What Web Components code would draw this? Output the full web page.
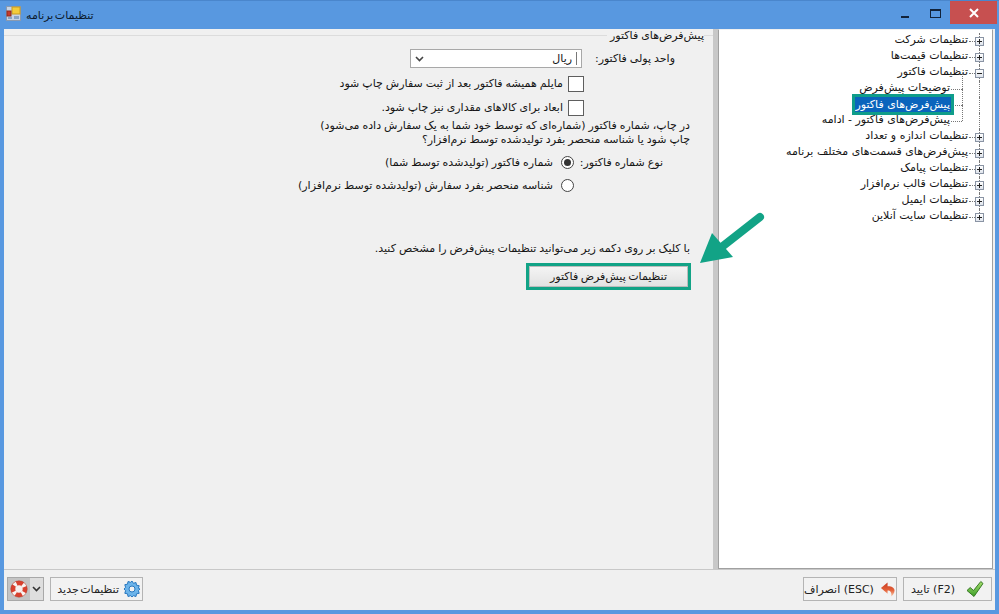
<!DOCTYPE html>
<html lang="fa" dir="rtl">
<head>
<meta charset="utf-8">
<title>تنظیمات برنامه</title>
<style>
  html, body { margin: 0; padding: 0; }
  body { width: 999px; height: 614px; overflow: hidden; font: 11px "DejaVu Sans", sans-serif; color: #111; }
</style>
</head>
<body>
<app-window caption="تنظیمات برنامه">
  <main-split>
    <tree-panel slot="tree">
      <tree-node state="plus">تنظیمات شرکت</tree-node>
      <tree-node state="plus">تنظیمات قیمت‌ها</tree-node>
      <tree-node state="minus">تنظیمات فاکتور</tree-node>
      <tree-node level="1">توضیحات پیش‌فرض</tree-node>
      <tree-node level="1" selected>پیش‌فرض‌های فاکتور</tree-node>
      <tree-node level="1" last>پیش‌فرض‌های فاکتور - ادامه</tree-node>
      <tree-node state="plus">تنظیمات اندازه و تعداد</tree-node>
      <tree-node state="plus">پیش‌فرض‌های قسمت‌های مختلف برنامه</tree-node>
      <tree-node state="plus">تنظیمات پیامک</tree-node>
      <tree-node state="plus">تنظیمات قالب نرم‌افزار</tree-node>
      <tree-node state="plus">تنظیمات ایمیل</tree-node>
      <tree-node state="plus" end>تنظیمات سایت آنلاین</tree-node>
    </tree-panel>
    <invoice-form slot="form"></invoice-form>
  </main-split>
  <footer-bar></footer-bar>
</app-window>

<script>
  class AppWindow extends HTMLElement {
    constructor() {
      super();
      this.attachShadow({ mode: "open" });
      this.shadowRoot.innerHTML = `
        <style>
          :host { display: flex; flex-direction: column; width: 999px; height: 614px; box-sizing: border-box;
            background: #5898e0; padding: 0 4px 4px; border-top: 1px solid #4a86cc; }
          #bar { direction: ltr; display: flex; align-items: center; height: 28px; flex: none; margin: 0 -4px; padding-left: 6px; }
          #bar > svg { align-self: flex-start; margin-top: 5px; }
          #caption { font: 11px "DejaVu Sans", sans-serif; word-spacing: -2px; color: #0c1a2e; margin-left: 5px; direction: rtl; }
          #spacer { flex: 1; }
          .ctl { width: 30px; height: 22px; display: flex; align-items: center; justify-content: center; margin-top: -4px; }
          #close { width: 47px; height: 23px; background: #c75050; margin: -5px 2px 0 0; }
          #body { flex: 1; display: flex; flex-direction: column; background: #f0f0f0; min-height: 0; }
        </style>
        <div id="bar">
          <svg width="15" height="15" viewBox="0 0 15 15">
            <rect x="0.5" y="0.5" width="14" height="14" fill="#c8d4e4" stroke="#8a9ab0"/>
            <rect x="6" y="1" width="8" height="7" fill="#f4cc3a" stroke="#c89a20"/>
            <rect x="1" y="5" width="4" height="5" fill="#c83a2a" stroke="#8a2a20"/>
            <rect x="2" y="11" width="4" height="2" fill="#8aa4c4"/>
            <rect x="8" y="10" width="5" height="3" fill="#8aa4c4"/>
          </svg>
          <span id="caption"></span>
          <span id="spacer"></span>
          <span class="ctl"><svg width="10" height="10" viewBox="0 0 10 10"><rect x="1" y="8" width="8" height="2" fill="#12233a"/></svg></span>
          <span class="ctl"><svg width="11" height="9" viewBox="0 0 11 9"><rect x="0.5" y="0.5" width="10" height="8" fill="none" stroke="#12233a"/><rect x="0" y="0" width="11" height="2" fill="#12233a"/></svg></span>
          <span class="ctl" id="close"><svg width="10" height="10" viewBox="0 0 10 10"><path d="M1 1l8 8M9 1l-8 8" stroke="#fff" stroke-width="2"/></svg></span>
        </div>
        <div id="body"><slot></slot></div>`;
      this.shadowRoot.getElementById("caption").textContent = this.getAttribute("caption");
    }
  }

  class MainSplit extends HTMLElement {
    constructor() {
      super();
      this.attachShadow({ mode: "open" });
      this.shadowRoot.innerHTML = `
        <style>
          :host { display: flex; direction: ltr; flex: 1; min-height: 0; }
          #left { width: 709px; flex: none; }
          #splitter { width: 5px; flex: none; background: #c8c8c8; }
          #right { flex: 1; min-width: 0; display: flex; }
        </style>
        <div id="left"><slot name="form"></slot></div>
        <div id="splitter"></div>
        <div id="right"><slot name="tree"></slot></div>`;
    }
  }

  class TreePanel extends HTMLElement {
    constructor() {
      super();
      this.attachShadow({ mode: "open" });
      this.shadowRoot.innerHTML = `
        <style>
          :host { display: block; flex: 1; box-sizing: border-box; height: 540px; margin-right: 2px; background: #fff;
            border: 1px solid #a0a0a0; border-top-color: #f0f0f0; padding-top: 3px; direction: rtl; }
        </style>
        <slot></slot>`;
    }
  }

  class TreeNode extends HTMLElement {
    constructor() {
      super();
      const state = this.getAttribute("state");
      const level = this.getAttribute("level") || "0";
      this.attachShadow({ mode: "open" });
      this.shadowRoot.innerHTML = `
        <style>
          :host { display: flex; align-items: center; height: 16px; position: relative; font: 11px "DejaVu Sans", sans-serif; color: #151515; white-space: nowrap; }
          /* vertical dotted guide of the root level */
          #guide { position: absolute; right: 12px; top: 0; bottom: 0; width: 0; border-right: 1px dotted #777; }
          :host([end]) #guide { bottom: 8px; }
          #sub { position: absolute; right: 29px; top: -8px; bottom: 8px; width: 0; border-right: 1px dotted #777; display: none; }
          :host([level="1"]) #sub { display: block; }
          #indent { width: ${level === "1" ? 13 : 0}px; flex: none; }
          #box { width: 9px; height: 9px; flex: none; margin: 0 8px 0 0; box-sizing: border-box; border: 1px solid #8a94a4; background: linear-gradient(#fff, #dfe4ec);
            position: relative; display: ${state ? "block" : "none"}; }
          #box::before { content: ""; position: absolute; left: 1px; right: 1px; top: 3px; height: 1px; background: #222; }
          #box.plus::after { content: ""; position: absolute; top: 1px; bottom: 1px; left: 3px; width: 1px; background: #222; }
          #nobox { width: 17px; flex: none; display: ${state ? "none" : "block"}; }
          #dash { width: ${level === "1" ? 11 : 6}px; flex: none; border-top: 1px dotted #777; }
          #label { padding: 0 1px; line-height: 14px; margin-top: -2px; position: relative; }
          :host([selected]) #label { background: #0a64bc; color: #fff; outline: 3px solid #0f9d8a; line-height: 15px; padding: 0 1px; }
        </style>
        <span id="guide"></span><span id="sub"></span>
        <span id="indent"></span><span id="nobox"></span><span id="box" class="${state || ""}"></span>
        <span id="dash"></span>
        <span id="label"><slot></slot></span>`;
    }
  }

  class CheckRow extends HTMLElement {
    constructor() {
      super();
      this.attachShadow({ mode: "open" });
      this.shadowRoot.innerHTML = `
        <style>
          :host { display: flex; align-items: center; gap: 5px; height: 17px; padding-right: 129px; }
          #box { width: 16px; height: 16px; box-sizing: border-box; border: 1px solid #5e5e5e; background: #fff; flex: none; }
        </style>
        <span id="box"></span><span><slot></slot></span>`;
    }
  }

  class RadioRow extends HTMLElement {
    constructor() {
      super();
      this.attachShadow({ mode: "open" });
      this.shadowRoot.innerHTML = `
        <style>
          :host { display: flex; align-items: center; height: 14px; }
          #lead { width: 139px; flex: none; padding-right: 50px; box-sizing: border-box; white-space: nowrap; }
          #dot { width: 13px; height: 13px; box-sizing: border-box; border: 1px solid #444; border-radius: 50%; background: #fff; flex: none; margin-left: 8px; position: relative; }
          :host([checked]) #dot::after { content: ""; position: absolute; inset: 2px; border-radius: 50%; background: #333; }
        </style>
        <span id="lead"><slot name="lead"></slot></span><span id="dot"></span><span><slot></slot></span>`;
    }
  }

  class InvoiceForm extends HTMLElement {
    constructor() {
      super();
      this.attachShadow({ mode: "open" });
      this.shadowRoot.innerHTML = `
        <style>
          :host { display: flex; flex-direction: column; height: 100%; direction: rtl; font: 11px "DejaVu Sans", sans-serif; word-spacing: -0.5px; color: #151515; position: relative; }
          #legend { display: flex; align-items: center; height: 13px; white-space: nowrap; }
          #legend::before { content: ""; width: 9px; border-top: 1px solid #dcdcdc; flex: none; }
          #legend::after { content: ""; flex: 1; border-top: 1px solid #dcdcdc; }
          #legend span { padding: 0 0 0 3px; margin-top: -1px; }
          #unit { display: flex; align-items: center; margin-top: 7px; height: 19px; padding-right: 38px; }
          #unit label { width: 93px; flex: none; white-space: nowrap; }
          #combo { width: 172px; height: 19px; box-sizing: border-box; border: 1px solid #a8a8a8; background: #fff; display: flex; align-items: center; padding: 0 4px; justify-content: space-between; }
          #combo span { border-right: 1px solid #777; padding-right: 4px; line-height: 13px; }
          .first { margin-top: 7px; }
          .second { margin-top: 7px; }
          #note { margin: 3px 23px 0 0; line-height: 14px; white-space: nowrap; }
          .r1 { margin-top: 8px; }
          .r2 { margin-top: 9px; }
          #hint { margin: 50px 23px 0 0; line-height: 14px; white-space: nowrap; }
          #action { margin: 7px 22px 0 0; width: 165px; height: 27px; box-sizing: border-box; border: 3px solid #12a386; background: #fff; }
          #action button { width: 100%; height: 100%; border: 1px solid #bcbcbc; background: linear-gradient(#f4f4f4, #e2e2e2); font: inherit; color: inherit; padding: 0; word-spacing: -1px; display: block; }
          #arrow { position: absolute; left: 693px; top: 180px; }
        </style>
        <div id="legend"><span>پیش‌فرض‌های فاکتور</span></div>
        <div id="unit">
          <label>واحد پولی فاکتور:</label>
          <div id="combo"><span>ریال</span>
            <svg width="9" height="6" viewBox="0 0 9 6"><path d="M1 1l3.5 3.5L8 1" fill="none" stroke="#444" stroke-width="1.6"/></svg></div>
        </div>
        <check-row class="first">مایلم همیشه فاکتور بعد از ثبت سفارش چاپ شود</check-row>
        <check-row class="second">ابعاد برای کالاهای مقداری نیز چاپ شود.</check-row>
        <div id="note">در چاپ، شماره فاکتور (شماره‌ای که توسط خود شما به یک سفارش داده می‌شود)<br>چاپ شود یا شناسه منحصر بفرد تولیدشده توسط نرم‌افزار؟</div>
        <radio-row class="r1" checked><span slot="lead">نوع شماره فاکتور:</span>شماره فاکتور (تولیدشده توسط شما)</radio-row>
        <radio-row class="r2">شناسه منحصر بفرد سفارش (تولیدشده توسط نرم‌افزار)</radio-row>
        <div id="hint">با کلیک بر روی دکمه زیر می‌توانید تنظیمات پیش‌فرض را مشخص کنید.</div>
        <div id="action"><button>تنظیمات پیش‌فرض فاکتور</button></div>
        <svg id="arrow" width="75" height="60" viewBox="0 0 75 60">
          <path d="M63 8L26 37" stroke="#12a386" stroke-width="8" stroke-linecap="round" fill="none"/>
          <path d="M3 54L15 24L36 48Z" fill="#12a386"/>
        </svg>`;
    }
  }

  class FooterButton extends HTMLElement {
    constructor() {
      super();
      this.attachShadow({ mode: "open" });
      this.shadowRoot.innerHTML = `
        <style>
          :host { display: flex; align-items: center; justify-content: center; gap: 6px; box-sizing: border-box; height: 24px;
            border: 1px solid #b4b4b4; background: #f2f2f2; font: 11px "DejaVu Sans", sans-serif; color: #222; white-space: nowrap; direction: rtl; }
        </style>
        <slot name="icon"></slot><span><slot></slot></span>`;
    }
  }

  class FooterBar extends HTMLElement {
    constructor() {
      super();
      this.attachShadow({ mode: "open" });
      this.shadowRoot.innerHTML = `
        <style>
          :host { display: flex; direction: ltr; align-items: flex-start; height: 41px; flex: none; padding: 7px 3px 0 3px; box-sizing: border-box; border-top: 1px solid #c8c8c8; }
          #help { display: flex; width: 37px; height: 24px; box-sizing: border-box; border: 1px solid #a8a8a8; background: #c4c4c4; }
          #help span { display: flex; align-items: center; justify-content: center; }
          #help .ring { width: 22px; }
          #help .drop { flex: 1; background: #dedede; }
          #spacer { flex: 1; }
          #new { width: 93px; margin-left: 6px; gap: 4px; justify-content: flex-start; padding-right: 1px; word-spacing: -2px; }
          #esc { width: 94px; margin-right: 6px; }
          #ok { width: 89px; gap: 11px; }
        </style>
        <div id="help">
          <span class="ring"><svg width="18" height="18" viewBox="0 0 18 18">
            <circle cx="9" cy="9" r="6" fill="#f6f0ee" stroke="#d8402e" stroke-width="4.6"/>
            <circle cx="9" cy="9" r="6" fill="none" stroke="#f8f4f2" stroke-width="4.6" stroke-dasharray="3 6.42" stroke-dashoffset="-3.2"/>
            <circle cx="9" cy="9" r="8.2" fill="none" stroke="#b0402e" stroke-width=".5"/>
          </svg></span>
          <span class="drop"><svg width="9" height="6" viewBox="0 0 9 6"><path d="M1 1l3.5 3.5L8 1" fill="none" stroke="#333" stroke-width="1.6"/></svg></span>
        </div>
        <footer-button id="new">
          <svg slot="icon" width="18" height="18" viewBox="0 0 18 18">
            <path d="M9 1l1.4 2.3 2.6-.8.5 2.7 2.7.5-.8 2.6L17 9l-1.6 1.7.8 2.6-2.7.5-.5 2.7-2.6-.8L9 17l-1.4-1.3-2.6.8-.5-2.7-2.7-.5.8-2.6L1 9l1.6-1.7-.8-2.6 2.7-.5.5-2.7 2.6.8z" fill="#6cb4ea" stroke="#2878c0"/>
            <circle cx="9" cy="9" r="3" fill="#f2f2f2" stroke="#2878c0"/>
          </svg>
          تنظیمات جدید
        </footer-button>
        <span id="spacer"></span>
        <footer-button id="esc">
          <svg slot="icon" width="17" height="17" viewBox="0 0 17 17">
            <defs><linearGradient id="undo" x1="0" y1="0" x2="0" y2="1"><stop offset="0" stop-color="#c8381f"/><stop offset=".55" stop-color="#e4623a"/><stop offset="1" stop-color="#f8c8a8"/></linearGradient></defs>
            <path d="M8 1L1 7l7 6V9.5c3 0 4.5 2 4 6.5 3-3 4-6 3-8-1-2.5-4-3-7-3z" fill="url(#undo)"/>
          </svg>
          (ESC) انصراف
        </footer-button>
        <footer-button id="ok">
          <svg slot="icon" width="18" height="18" viewBox="0 0 18 18">
            <defs><linearGradient id="tick" x1="0" y1="0" x2="0" y2="1"><stop offset="0" stop-color="#a8e070"/><stop offset="1" stop-color="#3c9e28"/></linearGradient></defs>
            <path d="M1 10.5L4.2 7.5l3.3 3L14.8 1.5 17 3.5 8 16.5z" fill="url(#tick)" stroke="#2a6e18" stroke-width=".9"/>
          </svg>
          (F2) تایید
        </footer-button>`;
    }
  }

  customElements.define("app-window", AppWindow);
  customElements.define("main-split", MainSplit);
  customElements.define("tree-panel", TreePanel);
  customElements.define("tree-node", TreeNode);
  customElements.define("check-row", CheckRow);
  customElements.define("radio-row", RadioRow);
  customElements.define("invoice-form", InvoiceForm);
  customElements.define("footer-button", FooterButton);
  customElements.define("footer-bar", FooterBar);
</script>
</body>
</html>
